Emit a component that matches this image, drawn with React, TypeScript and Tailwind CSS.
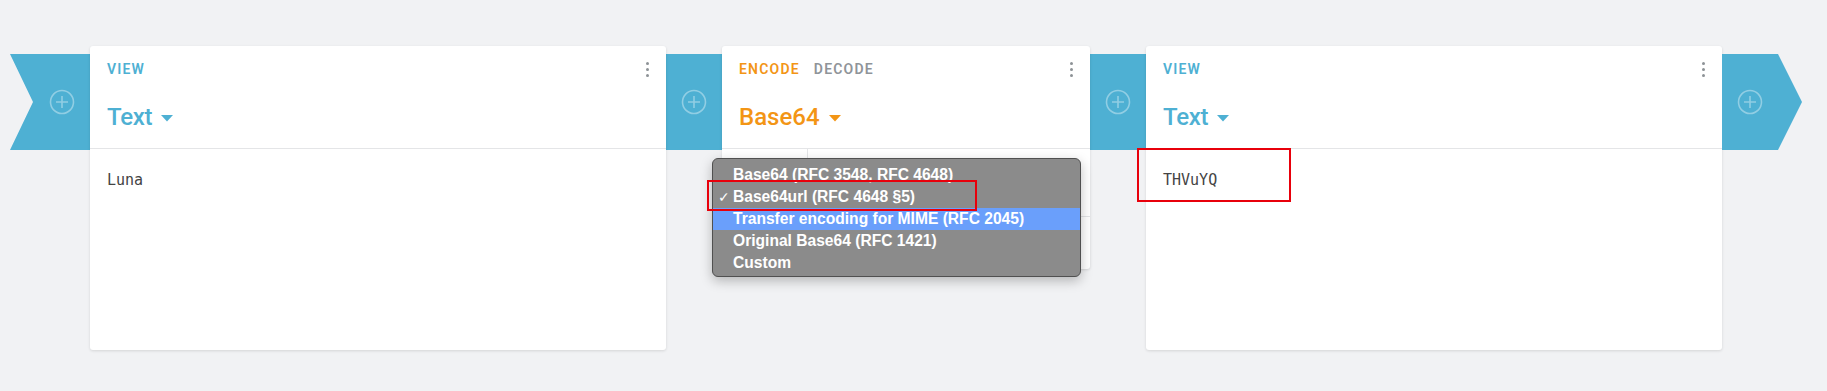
import React from "react";

const Plus = () => (
  <svg width="26" height="26" viewBox="0 0 26 26" fill="none">
    <circle cx="13" cy="13" r="11.5" stroke="rgba(255,255,255,0.38)" strokeWidth="1.6" />
    <path d="M13 7v12M7 13h12" stroke="rgba(255,255,255,0.38)" strokeWidth="1.6" />
  </svg>
);

const Kebab = () => (
  <div className="flex flex-col gap-[3px]">
    <span className="block h-[3px] w-[3px] rounded-full bg-[#8d9296]" />
    <span className="block h-[3px] w-[3px] rounded-full bg-[#8d9296]" />
    <span className="block h-[3px] w-[3px] rounded-full bg-[#8d9296]" />
  </div>
);

const Caret = ({ color }: { color: string }) => (
  <svg width="12" height="7" viewBox="0 0 12 7" className="ml-[9px] mt-[2px]">
    <path d="M0 0h12L6 6.5z" fill={color} />
  </svg>
);

const labelCls = "text-[14px] leading-4 font-semibold tracking-[1.2px]";
const bodyFont = { fontFamily: '"DejaVu Sans Mono", "Liberation Mono", monospace' };

const ViewCard: React.FC<{ value: string; children?: React.ReactNode }> = ({ value, children }) => (
  <div className="relative h-[304px] w-[576px] shrink-0 rounded-[3px] bg-white shadow-[0_1px_3px_rgba(0,0,0,0.12)]">
    <div className="h-[103px] border-b border-[#e4e5e7] px-[17px] pt-[15px]">
      <div className="flex h-4 items-center justify-between">
        <span className={`${labelCls} text-[#4eb0d3]`}>VIEW</span>
        <Kebab />
      </div>
      <div className="mt-[26px] flex h-[28px] items-center">
        <span className="text-[24px] font-medium leading-[28px] tracking-[-0.3px] text-[#4eb0d3]">Text</span>
        <Caret color="#4eb0d3" />
      </div>
    </div>
    <div className="px-[17px] pt-[21px] text-[15px] leading-5 text-[#444]" style={bodyFont}>
      {value}
    </div>
    {children}
  </div>
);

const options = [
  "Base64 (RFC 3548, RFC 4648)",
  "Base64url (RFC 4648 §5)",
  "Transfer encoding for MIME (RFC 2045)",
  "Original Base64 (RFC 1421)",
  "Custom",
];

export default function App() {
  return (
    <div
      className="h-[391px] w-full overflow-hidden bg-[#f1f2f4]"
      style={{ fontFamily: "Roboto, 'Liberation Sans', sans-serif" }}
    >
      <div className="flex items-start pl-[10px] pt-[46px]">
        <div className="mt-2 flex h-[96px] w-[80px] shrink-0 items-center justify-end bg-[#4eb0d3] [clip-path:polygon(0_0,100%_0,100%_100%,0_100%,23px_50%)]">
          <div className="flex w-[56px] justify-center">
            <Plus />
          </div>
        </div>

        <ViewCard value="Luna" />

        <div className="mt-2 flex h-[96px] w-[56px] shrink-0 items-center justify-center bg-[#4eb0d3]">
          <Plus />
        </div>

        <div className="relative h-[223px] w-[368px] shrink-0 rounded-[3px] bg-white shadow-[0_1px_3px_rgba(0,0,0,0.12)]">
          <div className="h-[103px] border-b border-[#e4e5e7] px-[17px] pt-[15px]">
            <div className="flex h-4 items-center justify-between">
              <div className="flex gap-[14px]">
                <span className={`${labelCls} text-[#f39515]`}>ENCODE</span>
                <span className={`${labelCls} text-[#8f9499]`}>DECODE</span>
              </div>
              <Kebab />
            </div>
            <div className="mt-[26px] flex h-[28px] items-center">
              <span className="text-[24px] font-medium leading-[28px] text-[#f39515]">Base64</span>
              <Caret color="#f39515" />
            </div>
          </div>
          <div className="flex h-[119px]">
            <div className="w-[86px] border-r border-[#e4e5e7]" />
            <div className="flex-1">
              <div className="h-[68px] border-b border-[#e4e5e7]" />
            </div>
          </div>

          <div
            className="absolute left-[-10px] top-[112px] h-[119px] w-[369px] overflow-hidden rounded-[6px] border border-[#505050] bg-[#8b8b8b] pt-[5px] shadow-[0_4px_12px_rgba(0,0,0,0.25)]"
            style={{ fontFamily: "'Liberation Sans', Arial, sans-serif" }}
          >
            {options.map((o, i) => (
              <div
                key={o}
                className={`flex h-[22px] items-center whitespace-nowrap text-[15.6px] font-bold text-white ${
                  i === 2 ? "bg-[#6a9ffb]" : ""
                }`}
              >
                <span className="w-[20px] pl-[5px] text-[14px] font-normal">{i === 1 ? "✓" : ""}</span>
                {o}
              </div>
            ))}
          </div>
          <div className="absolute left-[-15px] top-[134px] h-[31px] w-[270px] border-2 border-[#e8000b]" />
        </div>

        <div className="mt-2 flex h-[96px] w-[56px] shrink-0 items-center justify-center bg-[#4eb0d3]">
          <Plus />
        </div>

        <ViewCard value="THVuYQ">
          <div className="absolute left-[-9px] top-[102px] h-[54px] w-[154px] border-2 border-[#e8000b]" />
        </ViewCard>

        <div className="mt-2 flex h-[96px] w-[80px] shrink-0 items-center bg-[#4eb0d3] [clip-path:polygon(0_0,56px_0,100%_50%,56px_100%,0_100%)]">
          <div className="flex w-[56px] justify-center">
            <Plus />
          </div>
        </div>
      </div>
    </div>
  );
}
